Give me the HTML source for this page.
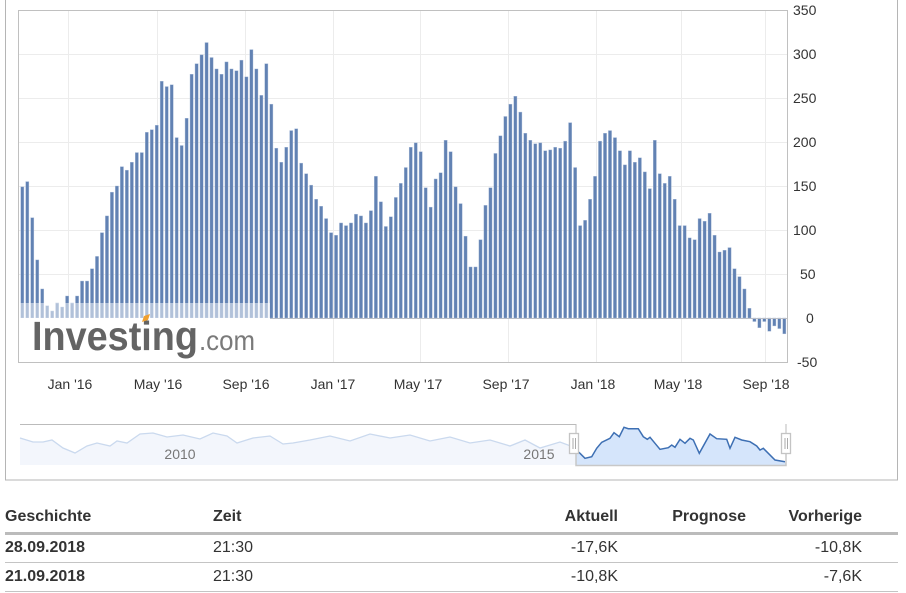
<!DOCTYPE html>
<html><head><meta charset="utf-8"><style>
body{margin:0;width:906px;height:593px;overflow:hidden;background:#fff;font-family:"Liberation Sans",Arial,sans-serif}
svg text{font-family:"Liberation Sans",Arial,sans-serif}
table{position:absolute;left:5px;top:500px;width:893px;border-collapse:collapse;font-size:16px;color:#333;table-layout:fixed}
td{padding:0}
</style></head><body>
<svg id="c" width="906" height="593" style="position:absolute;left:0;top:0">
<rect x="5.5" y="-1" width="892" height="481" fill="none" stroke="#b5b5b5"/>
<g id="grid" stroke="#ececec" stroke-width="1"></g>
<g id="bars"></g>
<line x1="18" y1="318.5" x2="788" y2="318.5" stroke="#b9bdc6"/>
<rect x="18" y="303" width="252" height="59" fill="#fff" opacity="0.5"/>
<rect x="18" y="318" width="252" height="44" fill="#fff"/>
<rect x="18.5" y="10.5" width="769" height="352" fill="none" stroke="#c0c0c0"/>
<text x="32" y="350" font-size="41" font-weight="bold" fill="#646464" textLength="166" lengthAdjust="spacingAndGlyphs">Investing</text>
<text x="199" y="350" font-size="28" fill="#7a7a7a" textLength="56" lengthAdjust="spacingAndGlyphs">.com</text>
<polygon points="144,316 150,314 148,320 142,322" fill="#f0a030"/>
<g font-size="14" fill="#333" text-anchor="middle">
<text x="70" y="389">Jan '16</text><text x="158" y="389">May '16</text><text x="246" y="389">Sep '16</text>
<text x="333" y="389">Jan '17</text><text x="418" y="389">May '17</text><text x="506" y="389">Sep '17</text>
<text x="593" y="389">Jan '18</text><text x="678" y="389">May '18</text><text x="766" y="389">Sep '18</text>
</g>
<g font-size="14" fill="#333">
<text x="793" y="15">350</text><text x="793" y="59">300</text><text x="793" y="103">250</text><text x="793" y="147">200</text>
<text x="793" y="191">150</text><text x="793" y="235">100</text><text x="800" y="279">50</text><text x="806" y="323">0</text><text x="797" y="367">-50</text>
</g>
<path d="M20,438 L33,442 43,442 52,440 63,448 75,453 87,446 97,443 110,446 117,441 127,443 140,434 153,433 167,437 183,435 200,439 213,433 227,436 237,443 253,438 270,436 283,444 293,443 310,440 330,436 350,441 370,434 390,438 410,435 430,441 450,437 470,443 490,440 510,446 525,440 540,448 560,442 576,448 L576,465 L20,465Z" fill="#f3f6fc" stroke="none"/>
<path d="M20,438 L33,442 43,442 52,440 63,448 75,453 87,446 97,443 110,446 117,441 127,443 140,434 153,433 167,437 183,435 200,439 213,433 227,436 237,443 253,438 270,436 283,444 293,443 310,440 330,436 350,441 370,434 390,438 410,435 430,441 450,437 470,443 490,440 510,446 525,440 540,448 560,442 576,448" fill="none" stroke="#cad9ee" stroke-width="1.3"/>
<polyline points="20,424.5 576,424.5 576,434" fill="none" stroke="#bbb"/>
<path d="M576,450 L580,453.3 585,458.3 591.7,456.7 596.7,448.3 601.7,442.3 610,438.3 614,432.7 619.3,436.7 624,427.3 628.3,428.7 638.3,428.7 643.3,436.7 647.3,439.3 650,437.3 655,443.3 660,449.3 668.3,447.7 671.7,445 675,447.3 680,439.3 685,443.3 690,438.3 693.3,440 699.3,453.3 710,434 716.7,438.7 726.7,439.3 730,448.3 735,437.3 741.7,440 750,441.7 756.7,446 760,450 763.3,448.3 768.3,453.3 775,460 785,461.7 L786,465 L576,465Z" fill="#d5e5fb" stroke="none"/>
<path d="M576,450 L580,453.3 585,458.3 591.7,456.7 596.7,448.3 601.7,442.3 610,438.3 614,432.7 619.3,436.7 624,427.3 628.3,428.7 638.3,428.7 643.3,436.7 647.3,439.3 650,437.3 655,443.3 660,449.3 668.3,447.7 671.7,445 675,447.3 680,439.3 685,443.3 690,438.3 693.3,440 699.3,453.3 710,434 716.7,438.7 726.7,439.3 730,448.3 735,437.3 741.7,440 750,441.7 756.7,446 760,450 763.3,448.3 768.3,453.3 775,460 785,461.7" fill="none" stroke="#3d6fb3" stroke-width="1.5"/>
<polyline points="576,452 576,465.5 786,465.5 786,452" fill="none" stroke="#c8c8c8" stroke-width="1.5"/>
<line x1="786" y1="424" x2="786" y2="434" stroke="#bbb"/>
<g fill="#fff" stroke="#c4c4c4" stroke-width="1.3">
<rect x="569.5" y="433.5" width="9" height="20"/><rect x="781.5" y="433.5" width="9" height="20"/>
</g>
<g stroke="#aaa" stroke-width="1"><line x1="573" y1="438" x2="573" y2="449"/><line x1="575.5" y1="438" x2="575.5" y2="449"/><line x1="785" y1="438" x2="785" y2="449"/><line x1="787.5" y1="438" x2="787.5" y2="449"/></g>
<g font-size="14" fill="#777" text-anchor="middle"><text x="180" y="459">2010</text><text x="539" y="459">2015</text></g>
</svg>
<table>
<colgroup><col style="width:208px"><col style="width:293px"><col style="width:112px"><col style="width:128px"><col style="width:152px"></colgroup>
<tr style="height:33px;font-weight:bold;border-bottom:3px solid #bbb"><td style="padding-top:2px">Geschichte</td><td style="padding-top:2px">Zeit</td><td style="text-align:right;padding-top:2px">Aktuell</td><td style="text-align:right;padding-top:2px">Prognose</td><td style="text-align:right;padding-right:36px;padding-top:2px">Vorherige</td></tr>
<tr style="height:29px;border-bottom:1px solid #c4c4c4"><td style="font-weight:bold">28.09.2018</td><td>21:30</td><td style="text-align:right">-17,6K</td><td></td><td style="text-align:right;padding-right:36px">-10,8K</td></tr>
<tr style="height:29px;border-bottom:1px solid #c4c4c4"><td style="font-weight:bold">21.09.2018</td><td>21:30</td><td style="text-align:right">-10,8K</td><td></td><td style="text-align:right;padding-right:36px">-7,6K</td></tr>
</table>
<script>
var v=[149,155,114,66,33,14,8,17,12.5,25,17,25,42,42,56,70,97,116,143,150,172,168,177,188,188,211,214,219,269,263,265,205,196,227,277,289,299,313,296,283,277,291,283,281,293,274,305,283,253,289,243,
193,177,194,213,215,176,164,151,135,127,113,97,94,108,105,108,118,116,108,122,161,132,104,115,137,153,171,194,199,189,148,126,158,165,202,189,149,130,93,58,58,89,128,148,187,207,229,243,252,234,210,
202,198,199,190,191,194,193,201,222,171,105,111,135,161,201,210,213,205,190,174,190,177,182,166,147,202,164,153,161,135,105,105,91,89,113,110,119,94,75,77,80,56,47,33,11,-4,-11,-4,-15,-9,-12,-18];
var ns="http://www.w3.org/2000/svg",g=document.getElementById('bars'),gr=document.getElementById('grid');
function el(n,a,p){var e=document.createElementNS(ns,n);for(var k in a)e.setAttribute(k,a[k]);p.appendChild(e);}
[10,54,98,142,186,230,274,362].forEach(function(y){el('line',{x1:18,x2:788,y1:y+.5,y2:y+.5},gr);});
[68,157,245,333,420,508,596,681,765].forEach(function(x){el('line',{x1:x+.5,x2:x+.5,y1:10,y2:362},gr);});
var step=762/(v.length-1);
v.forEach(function(d,i){var cx=22.3+i*step,h=Math.abs(d)*0.88,y=d>=0?318-h:318;
el('rect',{x:(cx-1.6).toFixed(2),y:y.toFixed(2),width:3.2,height:h.toFixed(2),fill:'#6282b3',stroke:'#a9bcd9','stroke-width':0.4},g);});
</script>
</body></html>
